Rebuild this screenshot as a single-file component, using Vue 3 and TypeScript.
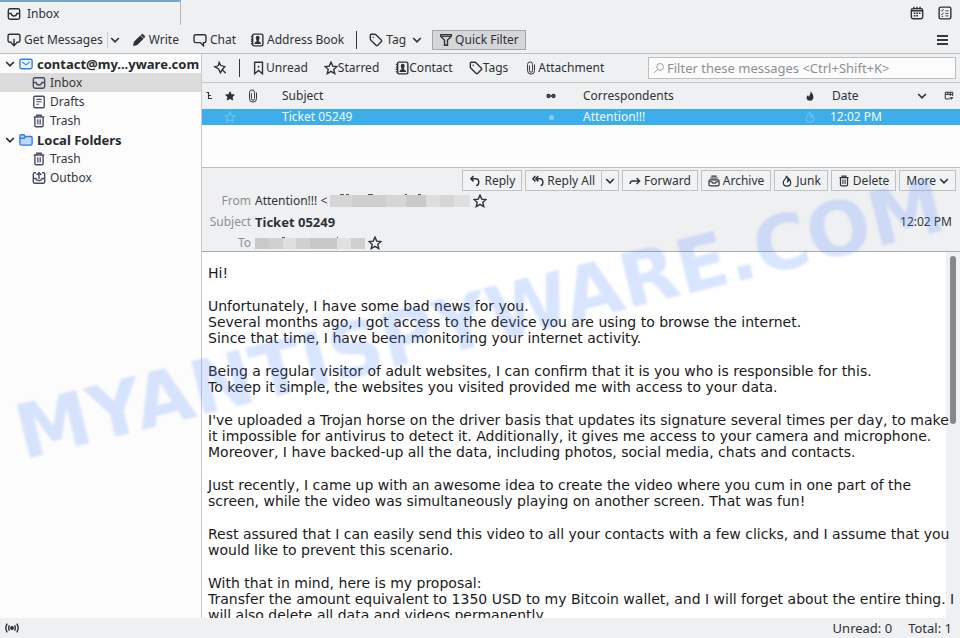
<script setup lang="ts">
import { ref } from 'vue'

interface Folder {
  name: string
  icon: string
  kind: 'root' | 'child'
  selected?: boolean
}

interface FilterOption {
  label: string
  icon: string
}

const folders: Folder[] = [
  { name: 'contact@my...yware.com', icon: 'mail', kind: 'root' },
  { name: 'Inbox', icon: 'inbox', kind: 'child', selected: true },
  { name: 'Drafts', icon: 'draft', kind: 'child' },
  { name: 'Trash', icon: 'trash', kind: 'child' },
  { name: 'Local Folders', icon: 'folder', kind: 'root' },
  { name: 'Trash', icon: 'trash', kind: 'child' },
  { name: 'Outbox', icon: 'outbox', kind: 'child' },
]

const filters: FilterOption[] = [
  { label: 'Unread', icon: 'bookmark' },
  { label: 'Starred', icon: 'star' },
  { label: 'Contact', icon: 'contact' },
  { label: 'Tags', icon: 'tag' },
  { label: 'Attachment', icon: 'clip' },
]

const paragraphs: string[] = [
  'Hi!',
  'Unfortunately, I have some bad news for you.\nSeveral months ago, I got access to the device you are using to browse the internet.\nSince that time, I have been monitoring your internet activity.',
  'Being a regular visitor of adult websites, I can confirm that it is you who is responsible for this.\nTo keep it simple, the websites you visited provided me with access to your data.',
  "I've uploaded a Trojan horse on the driver basis that updates its signature several times per day, to make it impossible for antivirus to detect it. Additionally, it gives me access to your camera and microphone.\nMoreover, I have backed-up all the data, including photos, social media, chats and contacts.",
  'Just recently, I came up with an awesome idea to create the video where you cum in one part of the screen, while the video was simultaneously playing on another screen. That was fun!',
  'Rest assured that I can easily send this video to all your contacts with a few clicks, and I assume that you would like to prevent this scenario.',
  'With that in mind, here is my proposal:\nTransfer the amount equivalent to 1350 USD to my Bitcoin wallet, and I will forget about the entire thing. I will also delete all data and videos permanently.',
]

const query = ref('')
</script>

<template>
  <svg class="sprite" aria-hidden="true">
    <symbol id="inbox" viewBox="0 0 16 16"><rect x="1.5" y="2" width="13" height="12" rx="2" /><path d="M1.5 7.5h3.2c.4 2 1.500 2.700 3.300 2.700s2.900-.7 3.300-2.700h3.200" /></symbol>
    <symbol id="draft" viewBox="0 0 16 16"><rect x="2" y="1.500" width="12" height="13" rx="1.500" /><path d="M5 5h6M5 7.800h6M5 10.600h3" stroke-width="1.200" /></symbol>
    <symbol id="trash" viewBox="0 0 16 16"><path d="M2 3.500h12M5.500 3V1.500h5V3M3.300 4v9q0 1.500 1.500 1.500h6.400q1.500 0 1.500-1.500V4" /><path d="M6.200 6v6M8 6v6M9.800 6v6" stroke-width="1" /></symbol>
    <symbol id="outbox" viewBox="0 0 16 16"><path d="M4.500 2h-1.500q-1.500 0-1.500 1.500v9q0 1.500 1.500 1.500h10q1.500 0 1.500-1.500v-9q0-1.500-1.500-1.500h-1.500M1.500 8.500h3q.5 2.500 3.500 2.500t3.500-2.500h3M8 9V2M5.300 4.700 8 2l2.700 2.700" /></symbol>
    <symbol id="mail" viewBox="0 0 16 16"><rect x="1" y="2.500" width="14" height="11" rx="2" fill="#eaf3ff" /><path d="m3.500 5.500 4.500 3.500 4.500-3.500" stroke-width="1.200" /></symbol>
    <symbol id="folder" viewBox="0 0 16 16"><path d="M1 12V3.500q0-1.500 1.500-1.500h3L7 4h6.500q1.500 0 1.500 1.500V12q0 1.800-1.800 1.800H2.800Q1 13.800 1 12Z" fill="#bdd7ff" /><path d="M1 6h5l1.500-2" /></symbol>
    <symbol id="chev" viewBox="0 0 10 10"><path d="m1.200 3 3.800 3.800L8.800 3" /></symbol>
    <symbol id="download" viewBox="0 0 16 16"><path d="M5 10.500H3Q1.200 10.500 1.200 8.700V3.300Q1.200 1.500 3 1.500h10q1.800 0 1.800 1.800v5.400q0 1.800-1.800 1.800h-2M8 6.500v7.500M4.800 11.200 8 14.500l3.200-3.300" /></symbol>
    <symbol id="pencil" viewBox="0 0 16 16"><path d="m1.500 14.500 1-4.500 7-7 3.500 3.500-7 7ZM10.800 1.800q1-1 2 0l1.400 1.400q1 1 0 2l-.5.500-3.400-3.400Z" fill="currentColor" stroke-width=".6" /></symbol>
    <symbol id="chat" viewBox="0 0 16 16"><path d="M3 2h10q1.800 0 1.800 1.800v5.400Q14.800 11 13 11h-1v3.700L8.300 11H3Q1.200 11 1.200 9.200V3.800Q1.200 2 3 2Z" /></symbol>
    <symbol id="contact" viewBox="0 0 16 16"><rect x="3" y="1.300" width="11.700" height="13.400" rx="1.500" /><path d="M1 4h2.500M1 7h2.500M1 9.500h2.500M1 12.300h2.500" /><path d="M5 12.500q0-2.200 2.700-3Q6 5 7 4q1.800-1.500 3.600 0 1 1-.7 5.500 2.800.8 2.800 3Z" fill="currentColor" stroke="none" /></symbol>
    <symbol id="tag" viewBox="0 0 16 16"><path d="M2.500 1.500h4q1 0 1.700.7l5.800 5.800q1 1 0 2l-4 4q-1 1-2 0L2.200 8.200q-.7-.7-.7-1.700v-4q0-1 1-1Z" /><circle cx="4.800" cy="4.800" r=".9" fill="currentColor" stroke="none" /></symbol>
    <symbol id="funnel" viewBox="0 0 16 16"><path d="M2 2h12v2l-4.300 4v6H6.300V8L2 4Z" /><path d="M3 4h10" stroke-width="1" /></symbol>
    <symbol id="bookmark" viewBox="0 0 16 16"><path d="M3 1.500h9v13l-4.500-3.700L3 14.500Z" /><circle cx="7.500" cy="6.500" r="1" fill="currentColor" stroke="none" /></symbol>
    <symbol id="star" viewBox="0 0 16 16"><path d="m8 1.300 2 4.500 4.900.5-3.700 3.200 1.100 4.900L8 11.800l-4.300 2.600 1.100-4.900L1.100 6.300 6 5.800Z" /></symbol>
    <symbol id="clip" viewBox="0 0 16 16"><path d="M6.200 5v6q0 1.800 1.800 1.800T9.800 11V4Q9.800 1 7 1T4 4v7q0 4 4 4t4-4V4" stroke-width="1.100" /></symbol>
    <symbol id="pin" viewBox="0 0 16 16"><path d="M7 1.500 9 5.200l4.500 1.300-2.800 3.200-2.200 3.800L6.300 9 2 6.500l4-1ZM10.500 9.800l4 4.200" stroke-width="1.500" /></symbol>
    <symbol id="search" viewBox="0 0 16 16"><circle cx="9.500" cy="6.500" r="4.500" stroke-width="1.100" /><path d="m6 10-4.500 4.500" stroke-width="1.100" /></symbol>
    <symbol id="thread" viewBox="0 0 10 10"><path d="M1.500 1.500h2v6h3.500M3.500 4.500h2.500" stroke-width="1.100" /></symbol>
    <symbol id="glasses" viewBox="0 0 12 8"><circle cx="3" cy="4" r="1.800" fill="#777" /><circle cx="9" cy="4" r="1.800" fill="#777" /><path d="M4.500 4h3" /></symbol>
    <symbol id="flame" viewBox="0 0 16 16"><path d="M7 1.200C8.500 4.500 3 6 3 10c0 2.900 2.400 4.800 5 4.800s5-1.900 5-4.800c0-2-1-3.400-2.200-4.700.1 2-.6 3-1.900 3.700C9.700 5.500 9.400 3 7 1.200Z" /></symbol>
    <symbol id="flame-solid" viewBox="0 0 16 16"><path d="M8.500.5C10 4.500 7 6.500 6.500 9 5.300 8.500 5 7.500 5 6.300 3 8 2.500 9.300 2.500 10.800c0 2.900 2.500 4.700 5.500 4.700s5.500-1.800 5.500-5C13.500 6.500 11.500 3 8.500.5Z" fill="currentColor" stroke="none" /></symbol>
    <symbol id="picker" viewBox="0 0 12 12"><path d="M7 9.500H1.500v-8h9V6M1.500 4h9M4.500 1.500v2.500M7.500 1.500V6" stroke-width="1.200" /><path d="M6.500 7.500h5L9 10.500Z" fill="currentColor" stroke="none" /></symbol>
    <symbol id="calendar" viewBox="0 0 16 16"><rect x="1.500" y="3" width="13" height="11.500" rx="2" /><path d="M1.500 5.500h13M4.500 .8v3M8 .8v3M11.500 .8v3" /><path d="M4.200 8.200h7.800M4.200 11.200h6" stroke-dasharray="2 1" stroke-width="1.800" /></symbol>
    <symbol id="tasks" viewBox="0 0 16 16"><rect x="1.300" y="1.300" width="13.400" height="13.400" rx="1.800" /><path d="m3.500 5 1 1 2-2.500m-3 5.500 1 1 2-2.500M8.500 5.500H12M8.500 8.500H12M8.500 11.300H12M4 11.800h2" stroke-width="1" /></symbol>
    <symbol id="reply" viewBox="0 0 16 16"><path d="M6 1.500 2.500 5 6 8.500M3 5h6q4 0 4 4.500T9.500 14" stroke-width="2" /></symbol>
    <symbol id="replyall" viewBox="0 0 16 16"><path d="M4.500 1.500 1 5l3.500 3.500M8.500 1.500 5 5l3.500 3.500M5.500 5H11q3.500 0 3.500 4.500t-3 4.500" stroke-width="1.900" /></symbol>
    <symbol id="forward" viewBox="0 0 16 16"><path d="M1.500 12Q1.500 8 5 8h9M10.200 4 14.200 8l-4 4" stroke-width="1.900" /></symbol>
    <symbol id="archive" viewBox="0 0 16 16"><path d="M4.500 1.500h7M3 4h10" stroke-width="1.400" /><rect x="1.300" y="6.500" width="13.400" height="8" rx="1.500" /><path d="M2 9h3q.5 2 3 2t3-2h3" /></symbol>
    <symbol id="online" viewBox="0 0 16 16"><circle cx="8" cy="8" r="1.400" fill="currentColor" /><path d="M5 5Q3.500 8 5 11M11 5q1.500 3 0 6M2.500 3Q-.5 8 2.500 13M13.500 3q3 5 0 10" /></symbol>
  </svg>

  <div class="app">
    <header class="tabs">
      <a class="tab" href="#inbox"><svg class="icon"><use href="#inbox" /></svg>Inbox</a>
      <div class="tab-tools">
        <button class="plain" aria-label="Calendar"><svg class="icon"><use href="#calendar" /></svg></button>
        <button class="plain" aria-label="Tasks"><svg class="icon"><use href="#tasks" /></svg></button>
      </div>
    </header>

    <nav class="toolbar">
      <button class="plain"><svg class="icon"><use href="#download" /></svg>Get Messages</button>
      <button class="plain get-menu" aria-label="Get Messages menu"><svg class="chev"><use href="#chev" /></svg></button>
      <button class="plain write"><svg class="icon"><use href="#pencil" /></svg>Write</button>
      <button class="plain"><svg class="icon"><use href="#chat" /></svg>Chat</button>
      <button class="plain"><svg class="icon"><use href="#contact" /></svg>Address Book</button>
      <span class="divider"></span>
      <button class="plain tag-menu"><svg class="icon"><use href="#tag" /></svg>Tag<svg class="chev"><use href="#chev" /></svg></button>
      <button class="quick" aria-pressed="true"><svg class="icon"><use href="#funnel" /></svg>Quick Filter</button>
      <button class="plain burger" aria-label="Application menu"><i></i><i></i><i></i></button>
    </nav>

    <div class="workspace">
      <aside class="folders">
        <a v-for="(f, i) in folders" :key="i" href="#" class="folder" :class="[f.kind, { selected: f.selected }]">
          <svg v-if="f.kind === 'root'" class="chev"><use href="#chev" /></svg>
          <svg class="icon"><use :href="'#' + f.icon" /></svg>{{ f.name }}
        </a>
      </aside>

      <main class="content">
        <div class="filterbar">
          <button class="plain" aria-label="Keep filters applied"><svg class="icon"><use href="#pin" /></svg></button>
          <span class="divider"></span>
          <div class="filters">
            <button v-for="f in filters" :key="f.label" class="plain"><svg class="icon"><use :href="'#' + f.icon" /></svg>{{ f.label }}</button>
          </div>
          <label class="search">
            <svg class="icon"><use href="#search" /></svg>
            <input v-model="query" type="text" aria-label="Filter these messages" placeholder="Filter these messages &lt;Ctrl+Shift+K&gt;" />
          </label>
        </div>

        <div class="thread-pane">
          <table class="threads">
            <colgroup>
              <col class="c-thread" /><col class="c-star" /><col class="c-clip" /><col /><col class="c-read" />
              <col class="c-who" /><col class="c-junk" /><col class="c-date" /><col class="c-pick" />
            </colgroup>
            <thead>
              <tr>
                <th><svg class="mini"><use href="#thread" /></svg></th>
                <th><svg class="mini solid"><use href="#star" /></svg></th>
                <th><svg class="icon"><use href="#clip" /></svg></th>
                <th class="text">Subject</th>
                <th><svg class="mini"><use href="#glasses" /></svg></th>
                <th class="text who">Correspondents</th>
                <th><svg class="mini"><use href="#flame-solid" /></svg></th>
                <th class="date"><span class="date-head">Date<svg class="mini"><use href="#chev" /></svg></span></th>
                <th><svg class="mini"><use href="#picker" /></svg></th>
              </tr>
            </thead>
            <tbody>
              <tr>
                <td></td>
                <td><svg class="faint"><use href="#star" /></svg></td>
                <td></td>
                <td class="text">Ticket 05249</td>
                <td><i class="dot"></i></td>
                <td class="text who">Attention!!!</td>
                <td><svg class="faint"><use href="#flame" /></svg></td>
                <td class="date">12:02 PM</td>
                <td></td>
              </tr>
            </tbody>
          </table>
        </div>

        <section class="msg-head">
          <div class="actions">
            <button class="btn"><svg class="icon"><use href="#reply" /></svg>Reply</button>
            <div class="split">
              <button class="btn"><svg class="icon"><use href="#replyall" /></svg>Reply All</button>
              <button class="btn arrow" aria-label="Reply options"><svg class="chev"><use href="#chev" /></svg></button>
            </div>
            <button class="btn"><svg class="icon"><use href="#forward" /></svg>Forward</button>
            <button class="btn"><svg class="icon"><use href="#archive" /></svg>Archive</button>
            <button class="btn"><svg class="icon"><use href="#flame" /></svg>Junk</button>
            <button class="btn"><svg class="icon"><use href="#trash" /></svg>Delete</button>
            <button class="btn more">More<svg class="chev"><use href="#chev" /></svg></button>
          </div>
          <dl class="fields">
            <dt>From</dt>
            <dd>
              Attention!!! &lt;
              <svg class="redact long" viewBox="0 0 140 14">
                <path d="M10 .5h4M16 .5h3M38 .5h5M75 .5h2M88 .5h3" stroke="#555" stroke-width="1" />
                <rect y="1" width="140" height="12" fill="#d6d6d7" /><rect x="22" y="1" width="34" height="12" fill="#cfcfd0" />
                <rect x="76" y="1" width="20" height="12" fill="#cacacb" /><rect x="96" y="1" width="14" height="12" fill="#dedede" />
                <rect x="124" y="1" width="16" height="12" fill="#dfdfe0" />
              </svg>
              <svg class="icon"><use href="#star" /></svg>
            </dd>
            <dt>Subject</dt>
            <dd class="subject"><strong>Ticket 05249</strong><time>12:02 PM</time></dd>
            <dt>To</dt>
            <dd>
              <svg class="redact short" viewBox="0 0 110 14">
                <path d="M27 1.500h3M82 1.500h1" stroke="#555" stroke-width="1" />
                <rect y="2" width="110" height="11" fill="#d0d0d1" /><rect y="2" width="14" height="11" fill="#c9c9ca" />
                <rect x="28" y="2" width="13" height="11" fill="#dfdfe0" /><rect x="55" y="2" width="27" height="11" fill="#c8c8c9" />
                <rect x="82" y="2" width="14" height="11" fill="#e0e0e1" />
              </svg>
              <svg class="icon"><use href="#star" /></svg>
            </dd>
          </dl>
        </section>

        <article class="message">
          <div class="track"><div class="thumb"></div></div>
          <div class="message-text"><p v-for="(p, i) in paragraphs" :key="i">{{ p }}</p></div>
        </article>
      </main>
    </div>

    <footer class="status">
      <svg class="icon"><use href="#online" /></svg>
      <span class="unread">Unread: 0</span>
      <span>Total: 1</span>
    </footer>

    <div class="watermark"><span>MYANTISPYWARE.COM</span></div>
  </div>
</template>

<style>
body {
  margin: 0;
  background: #eff0f1;
}
</style>

<style scoped>
.app {
  position: relative;
  display: flex;
  flex-direction: column;
  height: 100vh;
  overflow: hidden;
  background: #eff0f2;
  color: #2e3236;
  font: 12px/16px "Noto Sans", sans-serif;
}
.sprite {
  position: absolute;
  width: 0;
  height: 0;
}
svg {
  flex: none;
  fill: none;
  stroke: currentColor;
  stroke-width: 1.6;
}
.icon {
  width: 14px;
  height: 14px;
}
.chev {
  width: 10px;
  height: 10px;
}
button {
  font: inherit;
  color: inherit;
  white-space: nowrap;
}
.plain {
  display: flex;
  align-items: center;
  gap: 3px;
  padding: 0;
  border: 0;
  background: none;
}
.divider {
  width: 1px;
  height: 18px;
  background: #33373a;
}

.tabs {
  display: flex;
  justify-content: space-between;
  height: 25px;
}
.tab {
  display: flex;
  align-items: center;
  gap: 6px;
  box-sizing: border-box;
  width: 181px;
  padding-left: 7px;
  border-top: 2px solid #71a9cb;
  border-right: 1px solid #b4b7ba;
  color: inherit;
  text-decoration: none;
}
.tab-tools {
  display: flex;
  gap: 14px;
  padding-right: 8px;
}

.toolbar {
  display: flex;
  align-items: center;
  gap: 14px;
  box-sizing: border-box;
  height: 29px;
  padding: 2px 12px 0 7px;
  border-bottom: 1px solid #bcbfc1;
}
.get-menu {
  height: 16px;
  margin-left: -10px;
  padding-left: 2px;
  border-left: 1px solid #c9cbcd;
}
.write {
  margin-left: -2px;
}
.toolbar .divider {
  margin: 0 -2px;
}
.tag-menu .chev {
  margin-left: 3px;
}
.quick {
  display: flex;
  align-items: center;
  gap: 2px;
  height: 20px;
  margin-left: -4px;
  padding: 0 6px;
  border: 1px solid #a4a6a8;
  background: #d5d6d7;
}
.burger {
  flex-direction: column;
  gap: 2px;
  margin-left: auto;
}
.burger i {
  width: 11px;
  height: 2px;
  background: #36393c;
}

.workspace {
  display: flex;
  flex: 1;
  min-height: 0;
}
.folders {
  flex: none;
  width: 201px;
  background: #fcfcfc;
  border-right: 1px solid #c8cacc;
}
.folder {
  display: flex;
  align-items: center;
  gap: 4px;
  height: 19px;
  padding-left: 32px;
  color: #33373b;
  text-decoration: none;
  white-space: nowrap;
}
.folder.root {
  padding-left: 5px;
  color: #25292c;
  font-size: 13px;
  font-weight: bold;
}
.root .icon {
  color: #2f7fe6;
}
.child .icon {
  color: #484b66;
}
.selected {
  background: #dcdcdc;
}

.content {
  display: flex;
  flex: 1;
  flex-direction: column;
  min-width: 0;
}
.filterbar {
  display: flex;
  align-items: center;
  height: 28px;
  padding: 0 4px 0 11px;
  border-bottom: 1px solid #c3c5c7;
}
.filterbar .divider {
  margin: 0 12px;
}
.filters {
  display: flex;
  gap: 16px;
  margin-right: auto;
}
.filters .plain {
  gap: 0;
}
.search {
  display: flex;
  align-items: center;
  gap: 2px;
  box-sizing: border-box;
  width: 308px;
  height: 22px;
  padding: 0 4px;
  border: 1px solid #bcbec0;
  background: #fcfcfc;
  color: #8c8f92;
}
.search .icon {
  width: 12px;
  height: 12px;
}
.search input {
  flex: 1;
  min-width: 0;
  padding: 0;
  border: 0;
  outline: 0;
  background: none;
  font: inherit;
  font-size: 13px;
  color: #2e3236;
}
.search input::placeholder {
  color: #8c8f92;
  opacity: 1;
}

.thread-pane {
  flex: none;
  height: 84px;
  background: #fdfdfd;
  border-bottom: 1px solid #bcbfc1;
}
.threads {
  width: 100%;
  table-layout: fixed;
  border-collapse: collapse;
}
.c-thread { width: 16px; }
.c-star { width: 24px; }
.c-clip { width: 22px; }
.c-read { width: 20px; }
.c-who { width: 239px; }
.c-junk { width: 20px; }
.c-date { width: 118px; }
.c-pick { width: 22px; }
th,
td {
  padding: 0;
  font-weight: normal;
  text-align: center;
  line-height: 16px;
}
th {
  height: 26px;
  background: #eff0f2;
}
td {
  height: 16px;
  background: #3daee9;
  color: #f4fafe;
}
th svg,
td svg {
  display: block;
  margin: auto;
}
.text {
  padding-left: 18px;
  text-align: left;
}
.who {
  padding-left: 22px;
}
.date {
  padding-left: 10px;
  text-align: left;
}
.date-head {
  display: flex;
  padding: 0 11px 0 2px;
}
.date-head svg {
  margin: auto 0 auto auto;
}
.mini {
  width: 10px;
  height: 10px;
}
.solid {
  fill: currentColor;
}
.faint {
  width: 12px;
  height: 12px;
  color: #66c0f0;
}
.dot {
  display: block;
  width: 5px;
  height: 5px;
  margin: auto;
  border-radius: 50%;
  background: #85cdf3;
}

.msg-head {
  flex: none;
  box-sizing: border-box;
  height: 84px;
  padding: 2px 4px 0 0;
  border-bottom: 1px solid #a9acae;
}
.actions {
  display: flex;
  justify-content: flex-end;
  gap: 3px;
}
.btn {
  display: flex;
  align-items: center;
  gap: 3px;
  box-sizing: border-box;
  height: 21px;
  padding: 0 6px;
  border: 1px solid #bfc1c3;
  background: #f1f2f3;
}
.btn .icon {
  width: 12px;
  height: 12px;
}
.split {
  display: flex;
}
.split .arrow {
  padding: 0 3px;
  border-left: 0;
}
.fields {
  display: grid;
  grid-template-columns: 49px 1fr;
  grid-auto-rows: 20px;
  align-items: center;
  column-gap: 4px;
  row-gap: 1px;
  margin: 0;
}
dt {
  color: #8d9093;
  text-align: right;
}
dd {
  display: flex;
  align-items: center;
  gap: 3px;
  margin: 0;
}
.subject {
  justify-content: space-between;
  padding-right: 4px;
}
.subject strong {
  font-size: 13px;
}
.redact {
  height: 14px;
  stroke: none;
}
.long {
  width: 140px;
}
.short {
  width: 110px;
}

.message {
  position: relative;
  flex: 1;
  min-height: 0;
  overflow: hidden;
  background: #fff;
}
.message-text {
  position: relative;
  padding: 13px 2px 0 6px;
  color: #1a1a1a;
  font: 14px/16px "DejaVu Sans", sans-serif;
}
.message-text p {
  margin: 0 0 17px;
  white-space: pre-line;
}
.track {
  position: absolute;
  top: 0;
  right: 0;
  bottom: 0;
  width: 14px;
  background: #eff0f2;
}
.thumb {
  width: 6px;
  height: 46%;
  margin: 4px auto;
  border-radius: 3px;
  background: #84888b;
}

.status {
  display: flex;
  align-items: center;
  gap: 16px;
  height: 20px;
  padding: 0 8px 0 5px;
  background: #eff0f2;
  font-size: 13px;
}
.unread {
  margin-left: auto;
}

.watermark {
  position: absolute;
  inset: 0;
  display: flex;
  align-items: center;
  justify-content: center;
  color: rgba(80, 135, 255, 0.22);
  font: bold 75px/80px "DejaVu Sans", sans-serif;
  pointer-events: none;
}
.watermark span {
  transform: rotate(-14deg);
  filter: blur(1px);
}
</style>
